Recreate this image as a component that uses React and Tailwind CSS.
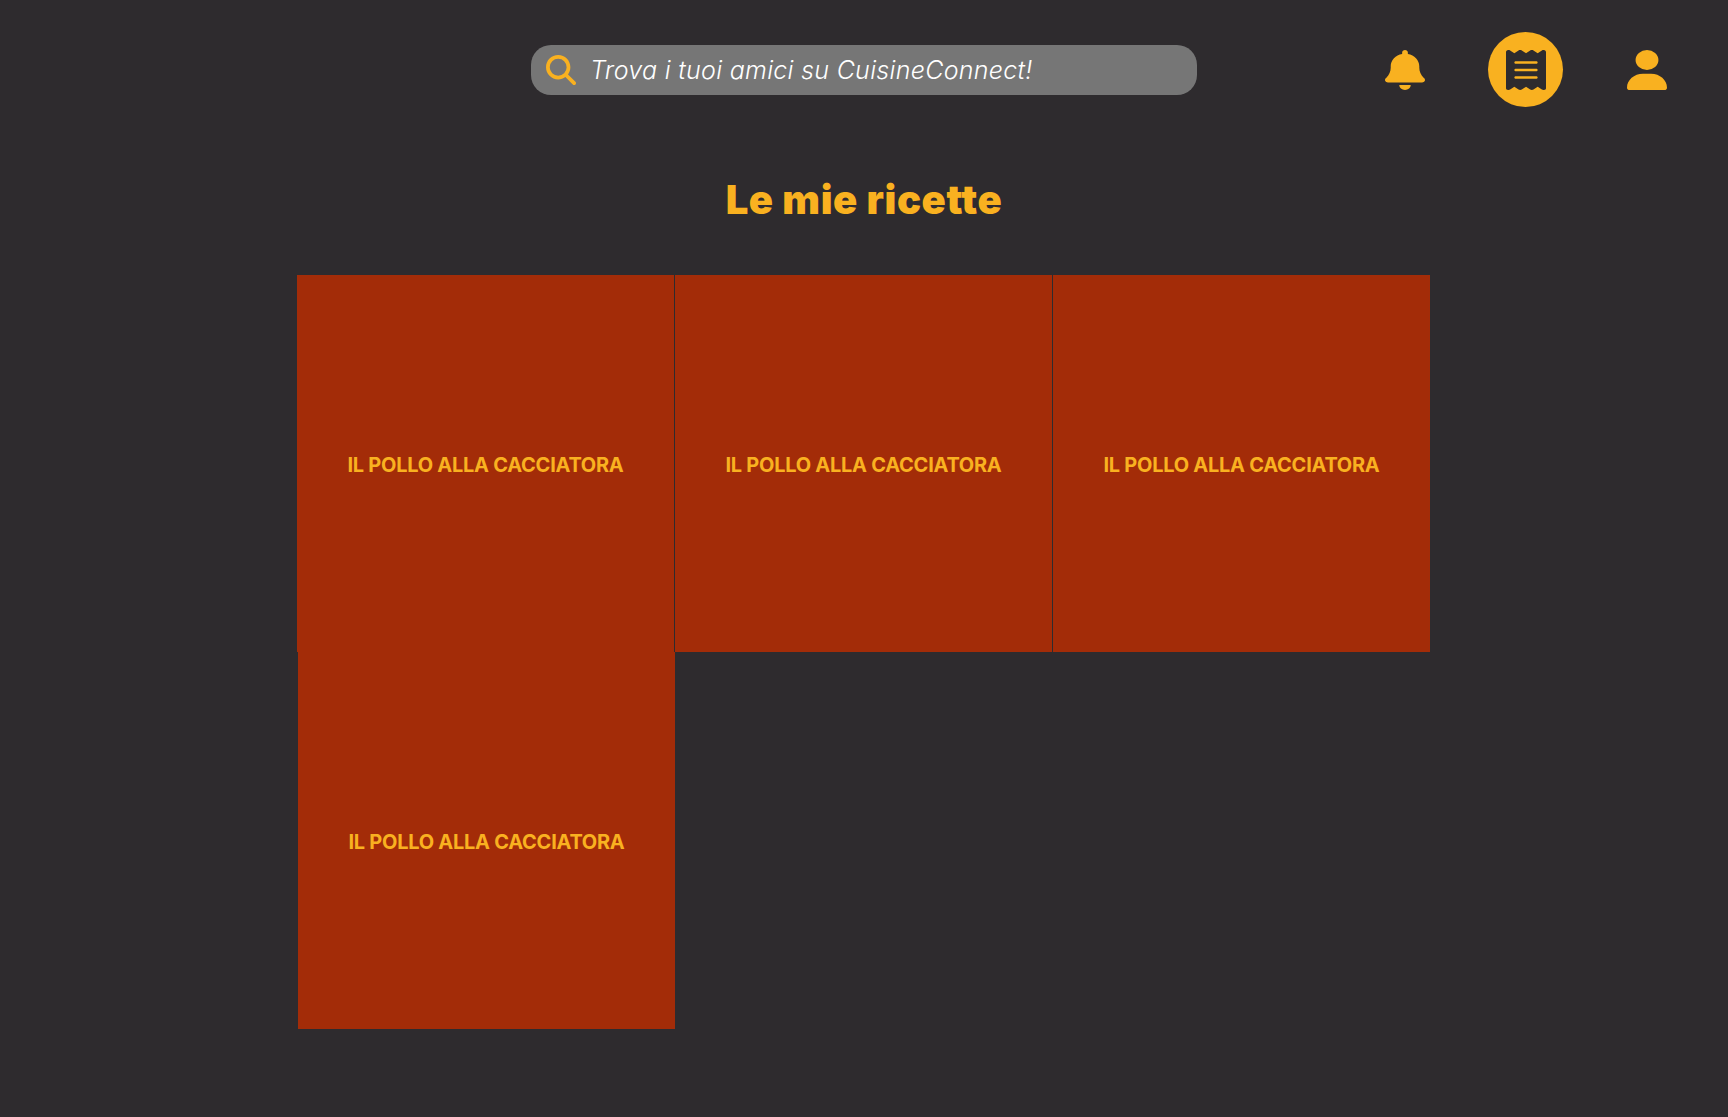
import { FaBell, FaReceipt, FaUser, FaMagnifyingGlass } from "react-icons/fa6";

const recipes = Array.from({ length: 4 }, () => "Il pollo alla cacciatora");

function RecipeCard({ title }) {
  return (
    <div className="flex h-[377px] w-[377px] items-center justify-center bg-[#a32c08] pt-0.5">
      <h2 className="whitespace-nowrap text-[20px] leading-[30px] font-bold tracking-[-0.26px] uppercase">{title}</h2>
    </div>
  );
}

export default function App() {
  return (
    <div className="min-h-screen bg-[#2e2b2e] font-['Inter',sans-serif] text-[#f9b120]">
      <header className="flex h-[139px] items-center pl-[531px]">
        <label className="flex h-[50px] w-[666px] items-center rounded-[20px] bg-[#767676] pl-[15px]">
          <FaMagnifyingGlass className="size-[30px] shrink-0" />
          <span className="mt-px ml-[14px] whitespace-nowrap text-[25px] leading-9 font-light tracking-[0.3px] text-white italic [font-feature-settings:'cv11']">
            Trova i tuoi amici su CuisineConnect!
          </span>
        </label>
        <nav className="ml-[188px] flex items-center">
          <FaBell preserveAspectRatio="none" className="size-10" />
          <div className="ml-[63px] flex size-[75px] items-center justify-center rounded-full bg-[#f9b120] text-[#2e2b2e]">
            <FaReceipt preserveAspectRatio="none" className="size-10" />
          </div>
          <FaUser preserveAspectRatio="none" className="ml-16 size-10" />
        </nav>
      </header>
      <main>
        <h1 className="mt-[31px] text-center text-[40px] leading-[60px] font-black tracking-[0.6px]">Le mie ricette</h1>
        <div className="mt-[45px] ml-[297px] flex w-[1133px] gap-px">
          {recipes.slice(0, 3).map((title, i) => (
            <RecipeCard key={i} title={title} />
          ))}
        </div>
        <div className="ml-[298px] flex">
          <RecipeCard title={recipes[3]} />
        </div>
      </main>
    </div>
  );
}
